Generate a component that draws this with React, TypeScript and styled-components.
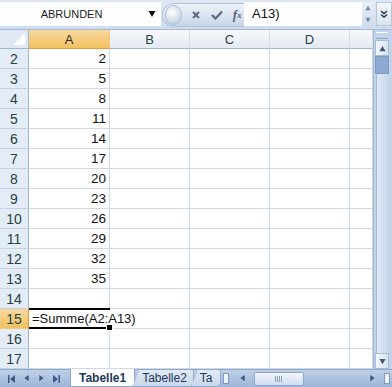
import styled, { createGlobalStyle } from "styled-components";

const GlobalStyle = createGlobalStyle`
  html, body {
    margin: 0;
    padding: 0;
    background: #fff;
  }
  body {
    font-family: "Liberation Sans", Arial, sans-serif;
  }
`;

const Window = styled.div`
  width: 392px;
  height: 387px;
  display: flex;
  flex-direction: column;
  overflow: hidden;
  background: #c5d5ea;
`;

const FormulaBar = styled.div`
  height: 30px;
  display: flex;
  align-items: center;
  background: linear-gradient(#dfe9f5, #cfdcee);
  border-bottom: 1px solid #a7bad4;
  box-sizing: border-box;
`;

const NameBox = styled.div`
  width: 143px;
  height: 24px;
  margin-top: -2px;
  background: #fff;
  display: flex;
  align-items: center;
  justify-content: center;
  font-size: 11px;
  color: #1c1c1c;
`;

const NameDrop = styled.div`
  width: 18px;
  height: 24px;
  margin-top: -2px;
  background: #fff;
  display: flex;
  align-items: center;
  justify-content: center;
`;

const ButtonPill = styled.div`
  height: 24px;
  width: 82px;
  display: flex;
  align-items: center;
  gap: 7px;
  padding-left: 2px;
  border-radius: 12px 0 0 12px;
  background: linear-gradient(#eef3fa, #c7d5e8);
  border: 1px solid #b2c3da;
  border-right: none;
  box-sizing: border-box;
  margin-left: 1px;
`;

const Knob = styled.div`
  width: 18px;
  height: 18px;
  border-radius: 50%;
  background: radial-gradient(circle at 40% 35%, #ffffff, #c9d6e6 70%, #a7b8cf);
  border: 1px solid #b0c0d6;
`;

const IconSlot = styled.span`
  width: 16px;
  display: flex;
  align-items: center;
  justify-content: center;
  font-family: "Liberation Serif", serif;
  font-style: italic;
  font-weight: 700;
  font-size: 13px;
  color: #56647a;
`;

const FormulaInput = styled.div`
  flex: 1;
  height: 24px;
  margin-top: -2px;
  background: #fff;
  display: flex;
  align-items: center;
  padding-left: 8px;
  font-size: 13px;
  color: #111;
`;

const Spin = styled.div`
  width: 12px;
  height: 24px;
  margin-top: -2px;
  background: linear-gradient(#eaf0f8, #cfdbeb);
  display: flex;
  flex-direction: column;
  align-items: center;
  justify-content: space-between;
  padding: 3px 0;
  box-sizing: border-box;
`;

const Expand = styled.div`
  width: 16px;
  height: 24px;
  margin-top: -2px;
  margin-left: 2px;
  background: linear-gradient(#f4f7fb, #dbe4f0);
  border: 1px solid #b7c6da;
  box-sizing: border-box;
  display: flex;
  align-items: center;
  justify-content: center;
`;

const Body = styled.div`
  flex: 1;
  display: flex;
  min-height: 0;
`;

const Grid = styled.div`
  width: 373px;
  display: grid;
  grid-template-columns: 29px 81px 80px 80px 80px 23px;
  grid-auto-rows: 20px;
  grid-template-rows: 19px;
  background: #fff;
  overflow: hidden;
  align-content: start;
`;

const Corner = styled.div`
  background: #dfe8f4;
  border-right: 1px solid #9eb6ce;
  border-bottom: 1px solid #9eb6ce;
  box-sizing: border-box;
  position: relative;
  &::after {
    content: "";
    position: absolute;
    right: 3px;
    bottom: 3px;
    border-left: 12px solid transparent;
    border-bottom: 12px solid #fff;
    opacity: 0.9;
  }
`;

const ColHead = styled.div<{ $active?: boolean }>`
  display: flex;
  align-items: center;
  justify-content: center;
  font-size: 13px;
  color: ${(p) => (p.$active ? "#2a2a2a" : "#27413e")};
  background: ${(p) =>
    p.$active
      ? "linear-gradient(#f9d99f, #f1c15f)"
      : "linear-gradient(#f8f9fc, #e4eaf3)"};
  border-right: 1px solid ${(p) => (p.$active ? "#f2c978" : "#d5dce6")};
  border-bottom: 1px solid ${(p) => (p.$active ? "#f29536" : "#9eb6ce")};
  box-sizing: border-box;
`;

const RowHead = styled.div<{ $active?: boolean }>`
  display: flex;
  align-items: center;
  justify-content: center;
  font-size: 14px;
  color: #27413e;
  background: ${(p) =>
    p.$active ? "linear-gradient(#f9d99f, #f1c15f)" : "#e4ecf7"};
  border-right: 1px solid ${(p) => (p.$active ? "#f29536" : "#9eb6ce")};
  border-bottom: 1px solid ${(p) => (p.$active ? "#f2c978" : "#c5d2e3")};
  box-sizing: border-box;
`;

const Cell = styled.div<{ $num?: boolean }>`
  display: flex;
  align-items: center;
  justify-content: ${(p) => (p.$num ? "flex-end" : "flex-start")};
  padding: 0 3px;
  font-size: 13.5px;
  color: #111;
  border-right: 1px solid #d0d7e5;
  border-bottom: 1px solid #d0d7e5;
  box-sizing: border-box;
  white-space: nowrap;
`;

const ActiveCell = styled.div`
  position: relative;
  display: flex;
  align-items: center;
  padding: 0 3px;
  font-size: 13px;
  color: #111;
  border-top: 2px solid #000;
  border-bottom: 2px solid #000;
  margin-top: -1px;
  box-sizing: border-box;
  white-space: nowrap;
  overflow: visible;
  z-index: 1;
  &::after {
    content: "";
    position: absolute;
    right: -3px;
    bottom: -4px;
    width: 5px;
    height: 5px;
    background: #000;
    border: 1px solid #fff;
  }
`;

const VScroll = styled.div`
  width: 19px;
  display: flex;
  flex-direction: column;
  background: #c3d3e9;
  border-left: 1px solid #9fb4cf;
  box-sizing: border-box;
  padding: 0 3px 0 1px;
`;

const Splitter = styled.div`
  height: 5px;
  margin: 2px 1px 1px;
  border-top: 1px solid #fff;
  border-bottom: 1px solid #8ea5c2;
`;

const ScrollBtn = styled.div`
  height: 16px;
  display: flex;
  align-items: center;
  justify-content: center;
  background: linear-gradient(90deg, #f2f6fb, #d7e2f0);
  border: 1px solid #a8bbd4;
  box-sizing: border-box;
`;

const VThumb = styled.div`
  height: 18px;
  background: #8eaad3;
  border: 1px solid #7e9bc4;
  box-sizing: border-box;
`;

const VTrack = styled.div`
  flex: 1;
  margin: 0 1px;
  background: linear-gradient(90deg, #dfe8f4, #c9d8ec);
  border-left: 1px solid #a5b9d3;
`;

const TabBar = styled.div`
  height: 18px;
  display: flex;
  align-items: stretch;
  background: linear-gradient(#bfd0e7, #9db6d8);
  border-top: 1px solid #8ea7c8;
  box-sizing: border-box;
`;

const NavButtons = styled.div`
  width: 70px;
  display: flex;
  align-items: center;
  justify-content: space-around;
  padding: 0 6px 0 4px;
  box-sizing: border-box;
`;

const Tab = styled.div<{ $active?: boolean }>`
  display: flex;
  align-items: center;
  padding: 0 ${(p) => (p.$active ? "8px" : "6px")} 0 ${(p) => (p.$active ? "8px" : "9px")};
  margin-top: -1px;
  margin-left: ${(p) => (p.$active ? "0" : "-3px")};
  font-size: 12px;
  font-weight: ${(p) => (p.$active ? 700 : 400)};
  color: #1e395b;
  background: ${(p) => (p.$active ? "#fff" : "linear-gradient(#e2eaf5, #c9d7ea)")};
  border: 1px solid #8ea7c8;
  border-top: ${(p) => (p.$active ? "none" : "1px solid #8ea7c8")};
  border-radius: 0 0 4px 0;
  clip-path: ${(p) => (p.$active ? "none" : "polygon(0 100%, 8px 0, 100% 0, 100% 100%)")};
  box-sizing: border-box;
  white-space: nowrap;
  overflow: hidden;
`;

const TabClip = styled(Tab)`
  width: 30px;
  padding: 0 0 0 8px;
`;

const Grip = styled.div`
  width: 4px;
  margin: 3px 2px;
  background: #f0f4fa;
  border: 1px solid #7f98ba;
`;

const HScroll = styled.div`
  flex: 1;
  display: flex;
  align-items: center;
  padding: 0 6px 0 8px;
  gap: 8px;
`;

const HThumb = styled.div`
  width: 50px;
  height: 14px;
  background: linear-gradient(#f3f7fc, #cfdcee);
  border: 1px solid #8ea7c8;
  border-radius: 2px;
  display: flex;
  align-items: center;
  justify-content: center;
  gap: 1px;
  box-sizing: border-box;
`;

const GripLine = styled.span`
  width: 1px;
  height: 6px;
  background: #8aa0bd;
`;

const HTrack = styled.div`
  flex: 1;
`;

const Tri = ({ dir, color = "#4e6a93", size = 7 }: { dir: "up" | "down" | "left" | "right"; color?: string; size?: number }) => {
  const pts = {
    up: "0,7 7,7 3.5,1",
    down: "0,1 7,1 3.5,7",
    left: "6,0 6,7 1,3.5",
    right: "1,0 1,7 6,3.5",
  }[dir];
  return (
    <svg width={size} height={size} viewBox="0 0 7 8">
      <polygon points={pts} fill={color} />
    </svg>
  );
};

const values = [2, 5, 8, 11, 14, 17, 20, 23, 26, 29, 32, 35];

function App() {
  const rows = [];
  for (let r = 2; r <= 17; r++) {
    const v = r <= 13 ? values[r - 2] : null;
    rows.push(
      <RowHead key={`h${r}`} $active={r === 15}>
        {r}
      </RowHead>
    );
    if (r === 15) {
      rows.push(<ActiveCell key={`a${r}`}>=Summe(A2:A13)</ActiveCell>);
    } else {
      rows.push(
        <Cell key={`a${r}`} $num>
          {v}
        </Cell>
      );
    }
    for (const c of ["B", "C", "D", "E"]) {
      rows.push(<Cell key={`${c}${r}`} />);
    }
  }

  return (
    <>
      <GlobalStyle />
      <Window>
        <FormulaBar>
          <NameBox>ABRUNDEN</NameBox>
          <NameDrop>
            <Tri dir="down" color="#111" size={8} />
          </NameDrop>
          <ButtonPill>
            <Knob />
            <IconSlot>
              <svg width="10" height="10" viewBox="0 0 10 10">
                <path d="M2 2 L8 8 M8 2 L2 8" stroke="#5b6b82" strokeWidth="2" />
              </svg>
            </IconSlot>
            <IconSlot>
              <svg width="12" height="10" viewBox="0 0 12 10">
                <path d="M1 5 L4.5 8.5 L11 1.5" stroke="#5b6b82" strokeWidth="2.2" fill="none" />
              </svg>
            </IconSlot>
            <IconSlot>
              f<span style={{ fontSize: 9 }}>x</span>
            </IconSlot>
          </ButtonPill>
          <FormulaInput>A13)</FormulaInput>
          <Spin>
            <Tri dir="up" color="#6f86a8" size={6} />
            <Tri dir="down" color="#6f86a8" size={6} />
          </Spin>
          <Expand>
            <svg width="8" height="8" viewBox="0 0 8 8">
              <path d="M1 1 L4 3.5 L7 1 M1 4.5 L4 7 L7 4.5" stroke="#1e2f4a" strokeWidth="1.4" fill="none" />
            </svg>
          </Expand>
        </FormulaBar>
        <Body>
          <Grid>
            <Corner />
            <ColHead $active>A</ColHead>
            <ColHead>B</ColHead>
            <ColHead>C</ColHead>
            <ColHead>D</ColHead>
            <ColHead />
            {rows}
          </Grid>
          <VScroll>
            <Splitter />
            <ScrollBtn>
              <Tri dir="up" color="#3f5678" />
            </ScrollBtn>
            <VThumb />
            <VTrack />
            <ScrollBtn>
              <Tri dir="down" color="#3f5678" />
            </ScrollBtn>
          </VScroll>
        </Body>
        <TabBar>
          <NavButtons>
            <svg width="8" height="8" viewBox="0 0 8 8">
              <rect x="0" y="0" width="1.5" height="8" fill="#3d5a86" />
              <polygon points="7,0 7,8 2,4" fill="#3d5a86" />
            </svg>
            <Tri dir="left" color="#3d5a86" />
            <Tri dir="right" color="#3d5a86" />
            <svg width="8" height="8" viewBox="0 0 8 8">
              <polygon points="1,0 1,8 6,4" fill="#3d5a86" />
              <rect x="6.5" y="0" width="1.5" height="8" fill="#3d5a86" />
            </svg>
          </NavButtons>
          <Tab $active>Tabelle1</Tab>
          <Tab>Tabelle2</Tab>
          <TabClip>Ta</TabClip>
          <Grip />
          <HScroll>
            <Tri dir="left" color="#3f5678" />
            <HThumb>
              <GripLine />
              <GripLine />
              <GripLine />
              <GripLine />
            </HThumb>
            <HTrack />
            <Tri dir="right" color="#3f5678" />
          </HScroll>
          <Grip />
        </TabBar>
      </Window>
    </>
  );
}

export default App;
